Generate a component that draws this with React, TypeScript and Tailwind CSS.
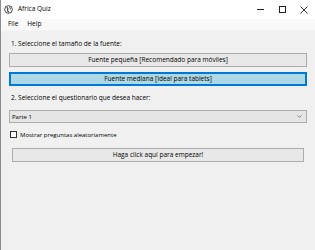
import { ChevronDown } from 'lucide-react';

export default function App() {
  const font = { fontFamily: '"Open Sans", "Liberation Sans", sans-serif' };

  return (
    <div className="w-[315px] h-[250px] flex flex-col border-l border-[#8c8c8c] bg-[#f0f0f0] text-black overflow-hidden" style={font}>
      {/* Title bar */}
      <div className="h-[19px] bg-white flex items-center shrink-0">
        <svg width="9" height="9" viewBox="0 0 10 10" className="ml-[3px]">
          <circle cx="5" cy="5" r="4.3" fill="none" stroke="#333" strokeWidth="1" />
          <path d="M3 2.5 Q5 3.5 4 5.5 Q3.5 7 5.5 8" fill="none" stroke="#333" strokeWidth="1.2" />
          <path d="M6 2 Q7.5 3.5 7 5" fill="none" stroke="#333" strokeWidth="1" />
        </svg>
        <span className="ml-[5px] text-[6.5px] leading-none">Africa Quiz</span>
        <div className="ml-auto flex items-center h-full">
          <div className="w-[22px] h-full flex items-center justify-center">
            <div className="w-[7px] h-px bg-[#222]" />
          </div>
          <div className="w-[22px] h-full flex items-center justify-center">
            <div className="w-[7px] h-[7px] border border-[#222]" />
          </div>
          <div className="w-[22px] h-full flex items-center justify-center">
            <svg width="8" height="8" viewBox="0 0 8 8">
              <path d="M0.5 0.5 L7.5 7.5 M7.5 0.5 L0.5 7.5" stroke="#222" strokeWidth="0.9" />
            </svg>
          </div>
        </div>
      </div>

      {/* Menu bar */}
      <div className="h-[12px] bg-[#f9f9f9] flex items-center text-[6.5px] leading-none shrink-0 border-b border-[#f4f4f4]">
        <span className="ml-[7px]">File</span>
        <span className="ml-[9px]">Help</span>
      </div>

      {/* Content */}
      <div className="flex flex-col px-[8px] pt-[6px] text-[6.5px] leading-none">
        <p className="ml-[2px] h-[14px] flex items-center">1. Seleccione el tamaño de la fuente:</p>

        <button className="mt-[2px] h-[14px] w-full bg-[#e8e8e8] border border-[#adadad] flex items-center justify-center">
          Fuente pequeña [Recomendado para móviles]
        </button>
        <button className="mt-[5px] h-[14px] w-full bg-[#add8e6] border-2 border-[#0078d7] flex items-center justify-center">
          Fuente mediana [Ideal para tablets]
        </button>

        <p className="ml-[2px] mt-[5px] h-[14px] flex items-center">2. Seleccione el questionario que desea hacer:</p>

        <div className="mt-[5px] h-[13px] w-full bg-[#e5e5e5] border border-[#acacac] flex items-center text-[6px]">
          <span className="ml-[2px]">Parte 1</span>
          <ChevronDown className="ml-auto mr-[3px] w-[7px] h-[7px]" strokeWidth={2} color="#444" />
        </div>

        <label className="mt-[8px] flex items-center text-[6px]">
          <span className="ml-[1px] w-[7px] h-[7px] border border-[#333] bg-white" />
          <span className="ml-[3px]">Mostrar preguntas aleatoriamente</span>
        </label>

        <button className="mt-[10px] mx-[3px] h-[14px] bg-[#e8e8e8] border border-[#adadad] flex items-center justify-center">
          Haga click aquí para empezar!
        </button>
      </div>
    </div>
  );
}
